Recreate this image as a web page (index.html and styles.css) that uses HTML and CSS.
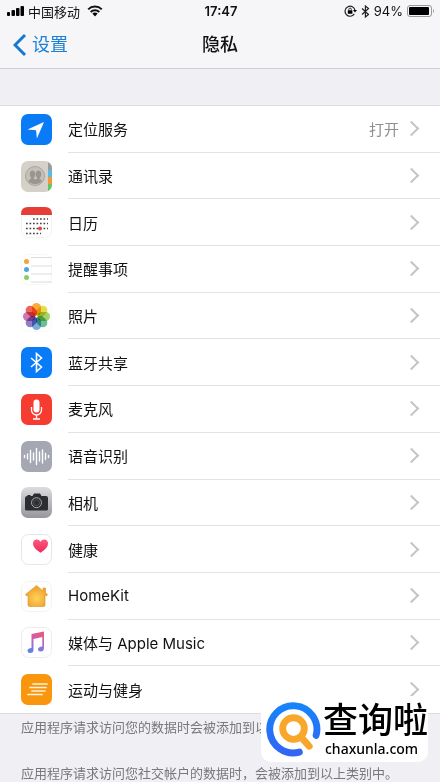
FILE: index.html
```html
<!DOCTYPE html>
<html lang="zh-CN">
<head>
  <meta charset="UTF-8">
  <meta name="viewport" content="width=device-width, initial-scale=1">
  <title>隐私</title>
  <link rel="stylesheet" href="styles.css">
</head>
<body>

  <div class="status-bar">
    <div class="status-left">
      <svg width="18" height="12" viewBox="0 0 18 12">
        <rect x="0" y="7" width="3" height="4" rx="1"/>
        <rect x="4.500" y="5" width="3.500" height="6" rx="1"/>
        <rect x="9" y="3" width="3.500" height="8" rx="1"/>
        <rect x="13.500" y="1" width="3.500" height="10" rx="1"/>
      </svg>
      <span>中国移动</span>
      <svg class="wifi" width="16" height="12" viewBox="0 0 16 12">
        <path d="M1.2 4.4a9.7 9.7 0 0 1 13.6 0M3.7 7a6.1 6.1 0 0 1 8.6 0" fill="none" stroke="#111" stroke-width="2"/>
        <path d="M5.4 8.6a3.8 3.8 0 0 1 5.2 0L8 11.4z"/>
      </svg>
    </div>
    <div class="status-time">17:47</div>
    <div class="status-right">
      <svg width="13" height="12" viewBox="0 0 13 12">
        <path d="M10.3 8.9A5 5 0 1 1 11 5.5" fill="none" stroke="#222" stroke-width="1.2"/>
        <path d="M9 5h4l-2 2.6z"/>
        <rect x="3.8" y="5.2" width="4.6" height="3.5" rx=".5"/>
        <path d="M4.8 5.5V4.4a1.3 1.3 0 0 1 2.6 0v1.1" fill="none" stroke="#222" stroke-width=".9"/>
      </svg>
      <svg width="9" height="13" viewBox="0 0 9 13">
        <path d="M1 3.5l6.5 6L4.4 12V1l3.1 2.5L1 9.5" fill="none" stroke="#222" stroke-width="1.2"/>
      </svg>
      <span>94%</span>
      <svg width="28" height="12" viewBox="0 0 28 12">
        <rect x=".5" y=".5" width="24" height="11" rx="2.5" fill="none" stroke="#999"/>
        <rect x="2" y="2" width="20" height="8" rx="1"/>
        <path d="M26 4q2 2 0 4z" fill="#999"/>
      </svg>
    </div>
  </div>

  <header class="nav-bar">
    <a class="back" href="#">
      <svg width="14" height="24" viewBox="0 0 14 24">
        <path d="M12 2L2 12l10 10" fill="none" stroke="#1478d4" stroke-width="3"/>
      </svg>
      设置
    </a>
    <h1>隐私</h1>
  </header>

  <main>
    <nav class="list">
      <a class="row" href="#">
        <svg class="icon" viewBox="0 0 31 31">
          <rect width="31" height="31" rx="7" fill="#0a7bf7"/>
          <path d="M23 8L6.500 15.600l8.600.600.800 8.300z" fill="#fff"/>
        </svg>
        <span class="label">定位服务<span class="value">打开</span></span>
      </a>
      <a class="row" href="#">
        <svg class="icon" viewBox="0 0 31 31">
          <rect width="31" height="31" rx="7" fill="#d6d1c8"/>
          <path d="M27 1.300q4 2 4 6V10h-4z" fill="#999b98"/>
          <path d="M27 9h4v7h-4z" fill="#5bb9e6"/>
          <path d="M27 16h4v7h-4z" fill="#f2993a"/>
          <path d="M27 23h4q0 5-4 7z" fill="#65c466"/>
          <circle cx="14" cy="15" r="9.500" fill="#c5c0b8" stroke="#a9a59e"/>
          <path d="M7.500 21q0-2.500 3-3.500-3-4-1-7 2-2 4 0 2 3-1 7l2 1 2-1q-3-4-1-7 2-2 4 0 2 3-1 7 2 1 2.500 3-6 5-13.500.500z" fill="#99958f"/>
        </svg>
        <span class="label">通讯录</span>
      </a>
      <a class="row" href="#">
        <svg class="icon" viewBox="0 0 31 31">
          <rect x=".5" y=".5" width="30" height="30" rx="7" fill="#fff" stroke="#f3f3f3"/>
          <path d="M0 8V7q0-7 7-7h17q7 0 7 7v1z" fill="#e63d36"/>
          <path d="M12 12h15M5 16.500h22M5 21.500h22M5 26.500h15" fill="none" stroke="#444" stroke-width="1.700" stroke-dasharray="1.700 1.800"/>
          <circle cx="19" cy="21.500" r="2" fill="#e04740"/>
        </svg>
        <span class="label">日历</span>
      </a>
      <a class="row" href="#">
        <svg class="icon" viewBox="0 0 31 31">
          <rect x=".5" y=".5" width="30" height="30" rx="7" fill="#fff" stroke="#f7f7f7"/>
          <path d="M10 3.500h21M10 12h21M10 20h21M10 28h21" stroke="#dcdcdc"/>
          <circle cx="5.500" cy="7.500" r="2.500" fill="#f2a33c"/>
          <circle cx="5.500" cy="15.500" r="2.500" fill="#4aa5e0"/>
          <circle cx="5.500" cy="23.500" r="2.500" fill="#83d160"/>
        </svg>
        <span class="label">提醒事项</span>
      </a>
      <a class="row" href="#">
        <svg class="icon petals" viewBox="0 0 31 31">
          <rect x=".5" y=".5" width="30" height="30" rx="7" fill="#fff" stroke="#f9f9f9"/>
          <g>
            <rect x="11" y="2" width="9" height="12.500" rx="4.500" fill="#f9ad35"/>
            <rect x="11" y="2" width="9" height="12.500" rx="4.500" fill="#e6dc45" transform="rotate(45 15.500 15.500)"/>
            <rect x="11" y="2" width="9" height="12.500" rx="4.500" fill="#a8d16b" transform="rotate(90 15.500 15.500)"/>
            <rect x="11" y="2" width="9" height="12.500" rx="4.500" fill="#68bf98" transform="rotate(135 15.500 15.500)"/>
            <rect x="11" y="2" width="9" height="12.500" rx="4.500" fill="#7aaddb" transform="rotate(180 15.500 15.500)"/>
            <rect x="11" y="2" width="9" height="12.500" rx="4.500" fill="#917dc6" transform="rotate(225 15.500 15.500)"/>
            <rect x="11" y="2" width="9" height="12.500" rx="4.500" fill="#cc79b2" transform="rotate(270 15.500 15.500)"/>
            <rect x="11" y="2" width="9" height="12.500" rx="4.500" fill="#ee6557" transform="rotate(315 15.500 15.500)"/>
          </g>
        </svg>
        <span class="label">照片</span>
      </a>
      <a class="row" href="#">
        <svg class="icon" viewBox="0 0 31 31">
          <rect width="31" height="31" rx="7" fill="#0a7bf7"/>
          <path d="M10 11l10.500 9-5 4.500v-18l5 4.500L10 20" fill="none" stroke="#fff" stroke-width="1.600"/>
        </svg>
        <span class="label">蓝牙共享</span>
      </a>
      <a class="row" href="#">
        <svg class="icon" viewBox="0 0 31 31">
          <rect width="31" height="31" rx="7" fill="#f63c31"/>
          <rect x="12.500" y="5.500" width="6" height="13" rx="3" fill="#fff"/>
          <path d="M10.500 13v3a5 5 0 0 0 10 0v-3M15.500 21v4M12 25h7" fill="none" stroke="#fff" stroke-width="1.300"/>
        </svg>
        <span class="label">麦克风</span>
      </a>
      <a class="row" href="#">
        <svg class="icon" viewBox="0 0 31 31">
          <rect width="31" height="31" rx="7" fill="#a5a8b3"/>
          <path d="M3.500 14.500v2M6.500 13v5M9.500 9.500v12M12.500 12v7M15.500 7.500v16M18.500 11v9M21.500 9v13M24.500 12.500v6M27.500 14.500v2" stroke="#fff" stroke-width="1.400" stroke-linecap="round"/>
        </svg>
        <span class="label">语音识别</span>
      </a>
      <a class="row" href="#">
        <svg class="icon" viewBox="0 0 31 31">
          <defs>
            <linearGradient id="cam" x2="0" y2="1"><stop stop-color="#dcdcdf"/><stop offset="1" stop-color="#96979b"/></linearGradient>
          </defs>
          <rect width="31" height="31" rx="7" fill="url(#cam)"/>
          <path d="M6.500 8h3v1h2l1.500-2.500h6L20.500 9H25q2 0 2 2v11q0 1.500-1.500 1.500h-20Q4 23.500 4 22V11q0-2 2.500-2z" fill="#2c2d30"/>
          <circle cx="15.500" cy="15.700" r="5" fill="#2c2d30" stroke="#a9a9ac"/>
          <circle cx="15.500" cy="15.700" r="3" fill="none" stroke="#515256"/>
        </svg>
        <span class="label">相机</span>
      </a>
      <a class="row" href="#">
        <svg class="icon" viewBox="0 0 31 31">
          <defs>
            <linearGradient id="heart" x2="0" y2="1"><stop stop-color="#fb5a80"/><stop offset="1" stop-color="#ee2857"/></linearGradient>
          </defs>
          <rect x=".5" y=".5" width="30" height="30" rx="7" fill="#fff" stroke="#e6e6e8"/>
          <path d="M19.500 18.800Q12 14 12 9.700q0-4 3.700-4.200 2.500 0 3.800 2.200 1.300-2.200 3.800-2.200Q27 5.700 27 9.700q0 4.300-7.500 9.100z" fill="url(#heart)"/>
        </svg>
        <span class="label">健康</span>
      </a>
      <a class="row" href="#">
        <svg class="icon" viewBox="0 0 31 31">
          <defs>
            <radialGradient id="house" cy=".6"><stop stop-color="#ffd35b"/><stop offset="1" stop-color="#f0a530"/></radialGradient>
          </defs>
          <rect x=".5" y=".5" width="30" height="30" rx="7" fill="#fff" stroke="#f3f3f3"/>
          <path d="M15.500 4.500L4.500 13.500l1 1.500 1.500-1v10q0 1.500 1.500 1.500h14q1.500 0 1.500-1.500V14l1.500 1 1-1.500-2-1.700V7H22v3z" fill="url(#house)" stroke="#dc912a" stroke-width=".6"/>
        </svg>
        <span class="label">HomeKit</span>
      </a>
      <a class="row" href="#">
        <svg class="icon" viewBox="0 0 31 31">
          <defs>
            <linearGradient id="note" gradientUnits="userSpaceOnUse" x1="18" y1="5" x2="14" y2="26"><stop stop-color="#f05575"/><stop offset=".5" stop-color="#b568c9"/><stop offset="1" stop-color="#5a82e8"/></linearGradient>
          </defs>
          <rect x=".5" y=".5" width="30" height="30" rx="7" fill="#fff" stroke="#ececef"/>
          <path d="M10.500 7L23 4.500V21q0 3.500-3.500 3.500-2.500 0-2.500-2.200 0-2.300 4.300-2.800V10L12.500 12v11q0 3-3.500 3-2.500 0-2.500-2.200 0-2.300 4-2.800z" fill="url(#note)"/>
        </svg>
        <span class="label">媒体与 Apple Music</span>
      </a>
      <a class="row" href="#">
        <svg class="icon" viewBox="0 0 31 31">
          <rect width="31" height="31" rx="7" fill="#f9960e"/>
          <path d="M12 10h14M9 13.500h16M11 17h13M7 20.500h14" stroke="#fff3dc" stroke-width="1.700" stroke-linecap="round"/>
        </svg>
        <span class="label">运动与健身</span>
      </a>
    </nav>

    <div class="notes">
      <p>应用程序请求访问您的数据时会被添加到以</p>
      <p>应用程序请求访问您社交帐户的数据时，会被添加到以上类别中。</p>
    </div>
  </main>

  <!-- site badge over the bottom corner -->
  <div class="badge">
    <svg width="55" height="55" viewBox="0 0 56 56">
      <defs>
        <linearGradient id="ring" x2="0" y2="1"><stop stop-color="#1684fb"/><stop offset="1" stop-color="#3265f4"/></linearGradient>
      </defs>
      <path d="M51 34A24 24 0 1 0 34 51" fill="none" stroke="url(#ring)" stroke-width="7" stroke-linecap="round"/>
      <circle cx="28" cy="27" r="11" fill="none" stroke="#f9a72b" stroke-width="7"/>
      <path d="M36 36l8 9" stroke="#f9a72b" stroke-width="7" stroke-linecap="round"/>
    </svg>
    <div class="badge-text">
      <strong>查询啦</strong>
      <span>chaxunla.com</span>
    </div>
  </div>

</body>
</html>
```
FILE: styles.css
```css
* {
  box-sizing: border-box;
}

body {
  margin: 0;
  position: relative;
  min-height: 100vh;
  background-color: #efeff4;
  font-family: Inter, "Noto Sans CJK SC", sans-serif;
  color: #111;
}

a {
  color: inherit;
  text-decoration: none;
}

.status-bar {
  display: grid;
  grid-template-columns: 1fr auto 1fr;
  align-items: center;
  height: 22px;
  padding: 0 5px 0 7px;
  background-color: #f6f6f8;
  font-size: 13px;
}

.status-left,
.status-right {
  display: flex;
  align-items: center;
  gap: 3px;
}

.status-right {
  justify-content: flex-end;
  gap: 4px;
}

.wifi {
  margin-left: 4px;
}

.status-time {
  font-weight: 600;
}

.nav-bar {
  display: grid;
  grid-template-columns: 1fr auto 1fr;
  align-items: center;
  height: 47px;
  padding: 0 13px;
  background-color: #f6f6f8;
  border-bottom: 1px solid #cfcfd3;
}

.nav-bar h1 {
  margin: 0;
  font-size: 18px;
  font-weight: 500;
  line-height: 24px;
}

.back {
  display: flex;
  align-items: center;
  gap: 5px;
  color: #1b80d6;
  font-size: 18px;
  line-height: 24px;
}

/* list */
.list {
  display: grid;
  grid-auto-rows: 1fr;
  min-height: 608px;
  margin-top: 36px;
  background-color: #fff;
  border-top: 1px solid #dcdce0;
}

.row {
  display: flex;
  align-items: center;
  gap: 16px;
  padding-left: 21px;
}

.icon {
  flex: none;
  width: 31px;
  height: 31px;
}

.petals g rect {
  mix-blend-mode: multiply;
}

.label {
  display: flex;
  flex: 1;
  align-items: center;
  align-self: stretch;
  gap: 7px;
  padding-right: 23px;
  border-bottom: 1px solid #e2e2e5;
  font-size: 15px;
}

.label::after {
  content: "";
  width: 9px;
  height: 9px;
  margin-left: auto;
  border-top: 2px solid #c4c4c9;
  border-right: 2px solid #c4c4c9;
  transform: rotate(45deg);
}

.value {
  margin-left: auto;
  color: #8e8e93;
}

.label:has(.value)::after {
  margin-left: 0;
}

.row:last-child .label {
  border-bottom-color: #fff;
}

.notes {
  padding: 3px 21px 0;
  border-top: 1px solid #dcdce0;
  color: #77777c;
  font-size: 13px;
}

.notes p {
  margin: 0 0 26px;
  line-height: 20px;
  white-space: nowrap;
}

.notes p:last-child {
  margin-bottom: 0;
}

.badge {
  position: absolute;
  right: 12px;
  bottom: 21px;
  display: flex;
  align-items: center;
  gap: 2px;
  height: 66px;
  padding-left: 5px;
  background-color: #fff;
  border-radius: 10px;
}

.badge-text {
  color: #000;
}

.badge strong,
.badge span {
  display: block;
}

.badge strong {
  font-size: 35px;
  font-weight: 500;
  line-height: 40px;
}

.badge span {
  padding-left: 2px;
  font-family: "Noto Sans", sans-serif;
  font-size: 14px;
  font-weight: 500;
  line-height: 18px;
}
```
